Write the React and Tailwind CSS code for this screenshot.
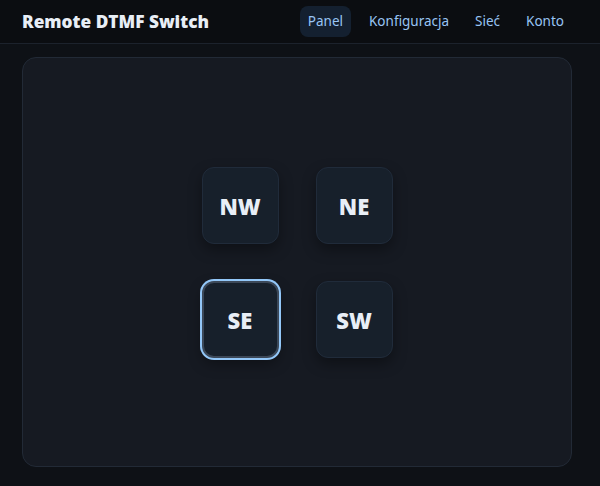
import { useState } from "react";

const tabs = ["Panel", "Konfiguracja", "Sieć", "Konto"];
const buttons = ["NW", "NE", "SE", "SW"];

export default function App() {
  const [active, setActive] = useState("SE");

  return (
    <div className="min-h-[486px] bg-[#0e1116] font-['Noto_Sans',sans-serif] text-[#e6edf5]">
      <header className="flex h-[44px] items-center justify-between border-b border-[#1c222c] bg-[#0b0d11] pl-[22px] pr-[28px]">
        <h1 className="font-['Open_Sans',sans-serif] text-[17.25px] font-extrabold text-[#e8eef6]">Remote DTMF Switch</h1>
        <nav className="flex items-center gap-[10px]">
          {tabs.map((t) => (
            <a
              key={t}
              className={
                "rounded-lg px-[8px] py-[5px] text-[13.5px] text-[#98c4f4] " +
                (t === "Panel" ? "bg-[#142030]" : "")
              }
            >
              {t}
            </a>
          ))}
        </nav>
      </header>

      <main className="pl-[22px] pt-[13px]">
        <div className="flex h-[410px] w-[550px] items-center justify-center rounded-[14px] border border-[#222a36] bg-[#161a22]">
          <div className="grid grid-cols-2 gap-[37px]">
            {buttons.map((b) => (
              <button
                key={b}
                onClick={() => setActive(b)}
                className={
                  "flex h-[77px] w-[77px] items-center justify-center rounded-[12px] bg-[#17202b] pt-[3px] font-['Open_Sans',sans-serif] text-[22px] font-extrabold text-[#e8eef6] shadow-[0_6px_14px_rgba(0,0,0,0.35)] " +
                  (active === b
                    ? "border-2 border-[#3c4858] ring-2 ring-[#93c7f8]"
                    : "border border-[#202b3a]")
                }
              >
                {b}
              </button>
            ))}
          </div>
        </div>
      </main>
    </div>
  );
}
